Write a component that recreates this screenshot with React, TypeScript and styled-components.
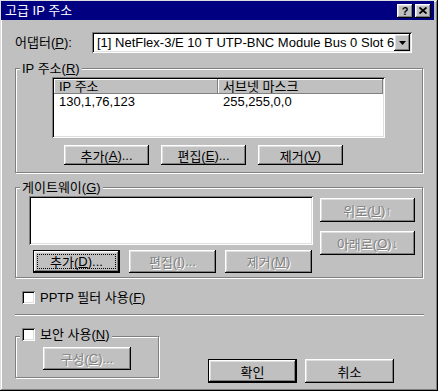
import React from 'react';
import styled, {createGlobalStyle} from 'styled-components';

const GlobalStyle = createGlobalStyle`
  html, body {
    margin: 0;
    padding: 0;
    background: #c0c0c0;
  }
  body {
    font-family: "Liberation Sans", "Noto Sans CJK KR", sans-serif;
    font-size: 13px;
    color: #000;
  }
`;

const raised = `
  box-shadow: inset -1px -1px #000, inset 1px 1px #fff, inset -2px -2px #808080, inset 2px 2px #dfdfdf;
`;

const sunken = `
  box-shadow: inset 1px 1px #808080, inset -1px -1px #fff, inset 2px 2px #000, inset -2px -2px #dfdfdf;
`;

const App = () => {
    return (
        <>
            <GlobalStyle/>
            <Window>
                <TitleBar>
                    <TitleText>고급 IP 주소</TitleText>
                    <CaptionButton>?</CaptionButton>
                    <CaptionButton $gap>
                        <svg width="8" height="7" viewBox="0 0 8 7">
                            <path d="M0.5 0.5 L7.5 6.5 M7.5 0.5 L0.5 6.5" stroke="#000" strokeWidth="1.8"/>
                        </svg>
                    </CaptionButton>
                </TitleBar>

                <Content>
                    <AdapterRow>
                        <AdapterLabel>어댑터(<u>P</u>):</AdapterLabel>
                        <Combo>
                            <ComboText>[1] NetFlex-3/E 10 T UTP-BNC Module Bus 0 Slot 6</ComboText>
                            <ComboButton>
                                <svg width="7" height="4" viewBox="0 0 7 4">
                                    <path d="M0 0 H7 L3.5 4 Z" fill="#000"/>
                                </svg>
                            </ComboButton>
                        </Combo>
                    </AdapterRow>

                    <GroupBox $width={408} $top={15}>
                        <Legend>IP 주소(<u>R</u>)</Legend>
                        <ListView>
                            <ListRow>
                                <HeaderCell $width={164}>IP 주소</HeaderCell>
                                <HeaderCell $width={165}>서브넷 마스크</HeaderCell>
                            </ListRow>
                            <ListRow>
                                <Cell $width={164}>130,1,76,123</Cell>
                                <Cell $width={165}>255,255,0,0</Cell>
                            </ListRow>
                        </ListView>
                        <IpButtons>
                            <Button $w={85} $h={20}>추가(<u>A</u>)...</Button>
                            <Button $w={85} $h={20}>편집(<u>E</u>)...</Button>
                            <Button $w={85} $h={20}>제거(<u>V</u>)</Button>
                        </IpButtons>
                    </GroupBox>

                    <GroupBox $width={408} $top={14}>
                        <Legend>게이트웨이(<u>G</u>)</Legend>
                        <GatewayBody>
                            <GatewayMain>
                                <GatewayList/>
                                <GatewayButtons>
                                    <Button $w={87} $h={23} $default $focus>추가(<u>D</u>)...</Button>
                                    <Button $w={87} $h={23} disabled>편집(<u>I</u>)...</Button>
                                    <Button $w={87} $h={23} disabled>제거(<u>M</u>)</Button>
                                </GatewayButtons>
                            </GatewayMain>
                            <SideButtons>
                                <Button $w={95} $h={24} disabled>위로(<u>U</u>)↑</Button>
                                <Button $w={95} $h={24} disabled>아래로(<u>O</u>)↓</Button>
                            </SideButtons>
                        </GatewayBody>
                    </GroupBox>

                    <CheckRow>
                        <CheckBox/>
                        <CheckLabel>PPTP 필터 사용(<u>F</u>)</CheckLabel>
                    </CheckRow>

                    <Separator/>

                    <BottomRow>
                        <GroupBox $width={144} $top={0}>
                            <Legend $offset={-10}>
                                <CheckBox/>
                                <CheckLabel>보안 사용(<u>N</u>)</CheckLabel>
                            </Legend>
                            <SecurityInner>
                                <Button $w={88} $h={23} disabled>구성(<u>C</u>)...</Button>
                            </SecurityInner>
                        </GroupBox>
                        <DialogButtons>
                            <Button $w={89} $h={24} $default>확인</Button>
                            <Button $w={89} $h={24}>취소</Button>
                        </DialogButtons>
                    </BottomRow>
                </Content>
            </Window>
        </>
    )
}

export default App;

const Window = styled.div`
  width: 438px;
  height: 391px;
  box-sizing: border-box;
  padding: 1px 4px 0 1px;
  background: #c0c0c0;
  box-shadow: inset -1px -1px #000, inset 1px 1px #dfdfdf, inset -2px -2px #808080, inset 2px 2px #fff;
  display: flex;
  flex-direction: column;
  overflow: hidden;
`;

const TitleBar = styled.div`
  height: 19px;
  background: #000080;
  display: flex;
  align-items: center;
  padding: 0 3px 0 4px;
  color: #fff;
`;

const TitleText = styled.div`
  flex: 1;
  line-height: 19px;
`;

const CaptionButton = styled.div<{ $gap?: boolean }>`
  width: 16px;
  height: 14px;
  margin-left: ${p => p.$gap ? '2px' : '0'};
  background: #c0c0c0;
  ${raised};
  display: flex;
  align-items: center;
  justify-content: center;
  color: #000;
  font-weight: bold;
  font-size: 11px;
  line-height: 14px;
`;

const Content = styled.div`
  display: flex;
  flex-direction: column;
  align-items: flex-start;
  padding: 0 0 0 14px;
`;

const AdapterRow = styled.div`
  display: flex;
  align-items: center;
  margin-top: 12px;
`;

const AdapterLabel = styled.div`
  width: 77px;
  line-height: 21px;
`;

const Combo = styled.div`
  width: 320px;
  height: 21px;
  box-sizing: border-box;
  padding: 2px;
  background: #fff;
  ${sunken};
  display: flex;
`;

const ComboText = styled.div`
  flex: 1;
  padding-left: 3px;
  line-height: 17px;
  white-space: nowrap;
  overflow: hidden;
`;

const ComboButton = styled.div`
  width: 16px;
  height: 17px;
  background: #c0c0c0;
  ${raised};
  display: flex;
  align-items: center;
  justify-content: center;
`;

const GroupBox = styled.div<{ $width: number; $top: number }>`
  position: relative;
  width: ${p => p.$width}px;
  margin-top: ${p => p.$top}px;
  box-sizing: border-box;
  border: 1px solid #808080;
  box-shadow: inset 1px 1px #fff, 1px 1px #fff;
`;

const Legend = styled.div<{ $offset?: number }>`
  position: absolute;
  left: 4px;
  top: ${p => p.$offset ?? -8}px;
  padding: 0 2px;
  background: #c0c0c0;
  line-height: 15px;
  display: flex;
  align-items: center;
`;

const ListView = styled.div`
  width: 333px;
  height: 61px;
  margin: 8px 0 0 36px;
  box-sizing: border-box;
  padding: 2px;
  background: #fff;
  ${sunken};
`;

const ListRow = styled.div`
  display: flex;
`;

const HeaderCell = styled.div<{ $width: number }>`
  width: ${p => p.$width}px;
  height: 15px;
  box-sizing: border-box;
  padding-left: 5px;
  line-height: 15px;
  background: #c0c0c0;
  box-shadow: inset -1px -1px #808080, inset 1px 1px #fff;
  white-space: nowrap;
`;

const Cell = styled.div<{ $width: number }>`
  width: ${p => p.$width}px;
  box-sizing: border-box;
  padding-left: 5px;
  line-height: 15px;
  white-space: nowrap;
`;

const IpButtons = styled.div`
  display: flex;
  gap: 12px;
  margin: 7px 0 7px 48px;
`;

const Button = styled.button<{ $w: number; $h: number; $default?: boolean; $focus?: boolean }>`
  width: ${p => p.$w}px;
  height: ${p => p.$h}px;
  box-sizing: border-box;
  padding: 0;
  margin: 0;
  font: inherit;
  background: #c0c0c0;
  color: #000;
  border: ${p => p.$default ? '1px solid #000' : 'none'};
  ${raised};
  display: flex;
  align-items: center;
  justify-content: center;
  white-space: nowrap;
  outline: ${p => p.$focus ? '1px dotted #000' : 'none'};
  outline-offset: -5px;

  &:disabled {
    color: #808080;
    text-shadow: 1px 1px 0 #fff;
  }
`;

const GatewayBody = styled.div`
  display: flex;
  align-items: flex-start;
`;

const GatewayMain = styled.div`
  width: 284px;
  margin: 8px 0 4px 13px;
  display: flex;
  flex-direction: column;
`;

const GatewayList = styled.div`
  height: 49px;
  box-sizing: border-box;
  background: #fff;
  ${sunken};
`;

const GatewayButtons = styled.div`
  display: flex;
  gap: 9px;
  margin: 5px 0 0 4px;
`;

const SideButtons = styled.div`
  display: flex;
  flex-direction: column;
  gap: 9px;
  margin: 10px 0 0 7px;
`;

const CheckRow = styled.div`
  display: flex;
  align-items: center;
  margin: 12px 0 0 7px;
`;

const CheckBox = styled.span`
  display: inline-block;
  flex: none;
  width: 13px;
  height: 13px;
  background: #fff;
  ${sunken};
`;

const CheckLabel = styled.span`
  margin-left: 5px;
  line-height: 15px;
  white-space: nowrap;
`;

const Separator = styled.div`
  width: 409px;
  margin-top: 9px;
  border-top: 1px solid #808080;
  border-bottom: 1px solid #fff;
`;

const BottomRow = styled.div`
  display: flex;
  align-items: flex-start;
  margin-top: 20px;
`;

const SecurityInner = styled.div`
  padding: 10px 0 7px 27px;
`;

const DialogButtons = styled.div`
  display: flex;
  gap: 8px;
  margin: 23px 0 0 49px;
`;
